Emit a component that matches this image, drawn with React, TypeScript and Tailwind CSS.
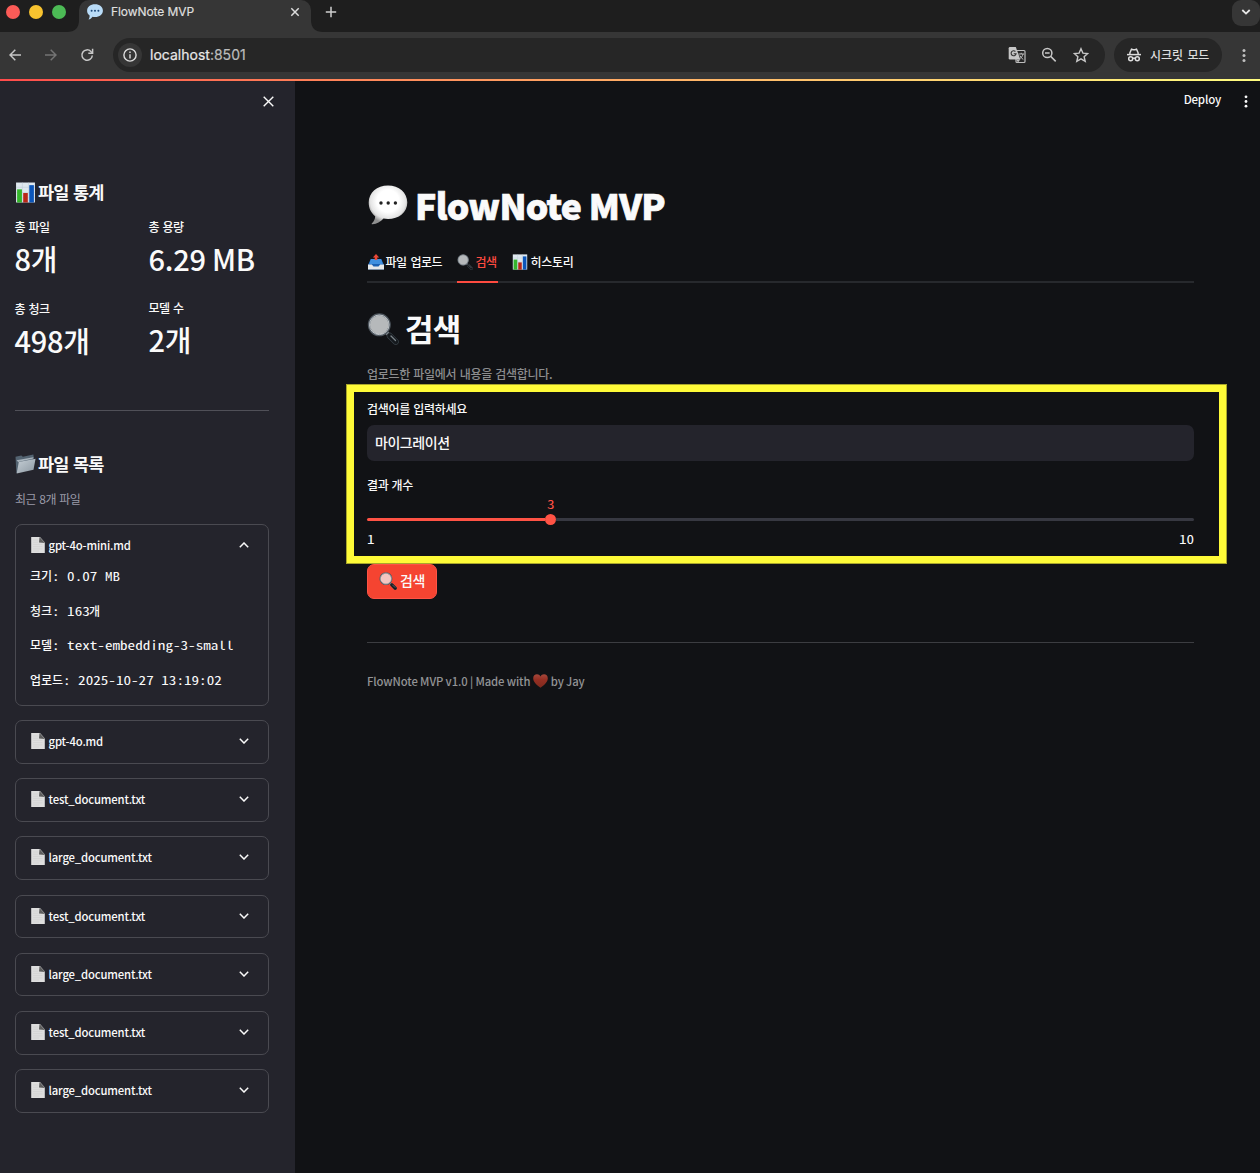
import React from "react";

type IconProps = { className?: string };

const sans = "font-['Noto_Sans_CJK_KR',sans-serif]";
const mono = "font-['Noto_Sans_Mono_CJK_KR','Liberation_Mono',monospace]";

function ChartEmoji({ className }: IconProps) {
  return (
    <svg className={className} viewBox="0 0 20 20">
      <rect x="1" y="0.5" width="18" height="19" fill="#dfe8ef" />
      <path d="M1 5h18M1 10h18M1 15h18M7 .5v19M13 .5v19" stroke="#bccbd8" strokeWidth=".5" />
      <rect x="2" y="7" width="4.6" height="12.5" fill="#35b52c" />
      <rect x="7.8" y="10.5" width="4.4" height="9" fill="#b82717" />
      <rect x="13.6" y="3" width="4.4" height="16.5" fill="#0b55b9" />
    </svg>
  );
}

function MagnifierEmoji({ className, lens = "#b6b9bb" }: IconProps & { lens?: string }) {
  return (
    <svg className={className} viewBox="0 0 32 32">
      <path d="M19 19l4 4" stroke="#8b9298" strokeWidth="3.500" />
      <path d="M22.800 22.800l6 6" stroke="#3b444b" strokeWidth="6" strokeLinecap="round" />
      <path d="M22.800 22.800l6 6" stroke="#15191d" strokeWidth="4.800" strokeLinecap="round" />
      <path d="M24 23l4.500 4.500" stroke="#7d868c" strokeWidth="1.200" strokeLinecap="round" />
      <circle cx="12.300" cy="11.8" r="10.400" fill={lens} stroke="#4e565e" strokeWidth="2.200" />
      <circle cx="12.300" cy="11.8" r="9.800" fill="none" stroke="#dbe0e3" strokeWidth=".8" />
    </svg>
  );
}

function SpeechEmoji({ className }: IconProps) {
  return (
    <svg className={className} viewBox="0 0 40 40">
      <defs>
        <radialGradient id="bubble" cx=".5" cy=".4" r=".57">
          <stop offset=".5" stopColor="#ffffff" />
          <stop offset=".8" stopColor="#e4e4e4" />
          <stop offset="1" stopColor="#8f8f8f" />
        </radialGradient>
      </defs>
      <path
        d="M20 .5C31 .5 39.3 7.600 39.300 17.500S31 34 20 34c-1.600 0-3.100-.1-4.500-.4C12.600 37 8.500 39.400 4.300 39.300c-.7 0-.8-.7-.3-1.100 2-1.700 3.100-4.400 3.200-7C3.200 28 .7 23.500.7 17.500.7 7.600 9 .5 20 .5z"
        fill="url(#bubble)"
      />
      <circle cx="13" cy="18" r="1.700" fill="#222" />
      <circle cx="20.200" cy="18" r="1.700" fill="#222" />
      <circle cx="27.400" cy="18" r="1.700" fill="#222" />
    </svg>
  );
}

function TabBubble({ className }: IconProps) {
  return (
    <svg className={className} viewBox="0 0 16 16">
      <path d="M8 .3c4.600 0 7.900 2.700 7.900 6.400S12.600 13 8 13c-.9 0-1.700-.1-2.500-.3-1 1.500-2.600 2.700-4 2.900.8-1 1.200-2.500 1.100-4.100C1 10.300.1 8.600.1 6.700.1 3 3.400.3 8 .3z" fill="#b9dcf8" />
      <circle cx="4.600" cy="6.700" r="1" fill="#1e4b7c" />
      <circle cx="8" cy="6.700" r="1" fill="#1e4b7c" />
      <circle cx="11.400" cy="6.700" r="1" fill="#1e4b7c" />
    </svg>
  );
}

function OutboxEmoji({ className }: IconProps) {
  return (
    <svg className={className} viewBox="0 0 16 16">
      <path d="M2.500 5.500h11L16 11v4.500H0V11z" fill="#1c62b4" />
      <path d="M2.800 5h10.400l1.600 5H1.200z" fill="#3f8fdf" />
      <path d="M0 10.500h3.800l1.700 2h5l1.700-2H16v5H0z" fill="#e6e8ea" />
      <path d="M8 0l3.200 3.400H9.300V6H6.700V3.400H4.800z" fill="#ea4837" />
    </svg>
  );
}

function FolderEmoji({ className }: IconProps) {
  return (
    <svg className={className} viewBox="0 0 20 19">
      <defs>
        <linearGradient id="folder" x1="0" y1="0" x2="1" y2="1">
          <stop stopColor="#c6cfd6" />
          <stop offset="1" stopColor="#8c98a2" />
        </linearGradient>
      </defs>
      <path d="M.5 2.500L6 1.300l1.500 1.200L17.500.5l.5 3.500L3 17.500 1.300 18z" fill="#536371" />
      <path d="M1.500 6L17.500 3v1.200L3 7.500z" fill="#a9b4bd" />
      <path d="M3.600 7.700L19.600 4.600 17.600 15 1.600 18.500z" fill="url(#folder)" />
    </svg>
  );
}

function PageEmoji({ className }: IconProps) {
  return (
    <svg className={className} viewBox="0 0 14 16">
      <path d="M.2 0H9l4.800 5.500V16H.2z" fill="#dedede" />
      <path d="M2 3h5M2 5.200h5M2 7.400h9.500M2 9.600h9.500M2 11.800h9.500M2 14h6" stroke="#cecece" strokeWidth=".6" />
      <path d="M8.500 0L14 6 8 5.500z" fill="#5d5d5d" />
    </svg>
  );
}

function HeartEmoji({ className }: IconProps) {
  return (
    <svg className={className} viewBox="0 0 15 14">
      <defs>
        <linearGradient id="heart" x1="0" y1="0" x2="0" y2="1">
          <stop stopColor="#a5483b" />
          <stop offset=".4" stopColor="#962f23" />
          <stop offset="1" stopColor="#7e2a1e" />
        </linearGradient>
      </defs>
      <path d="M7.500 13.800C4 11.300.2 8 .2 4.200.2 1.900 1.900.3 4 .3c1.500 0 2.800.8 3.500 2.100C8.200 1.100 9.500.3 11 .3c2.100 0 3.800 1.600 3.800 3.900 0 3.800-3.800 7.100-7.300 9.600z" fill="url(#heart)" />
    </svg>
  );
}

function Chevron({ up, className }: IconProps & { up?: boolean }) {
  return (
    <svg className={className} viewBox="0 0 10 6" fill="none" stroke="currentColor" strokeWidth="1.500">
      {up ? <path d="M.8 5.200L5 1l4.200 4.200" /> : <path d="M.8.8L5 5 9.200.8" />}
    </svg>
  );
}

function Dots({ className }: IconProps) {
  return (
    <svg className={className} viewBox="0 0 4 14" fill="currentColor">
      <circle cx="2" cy="2" r="1.500" />
      <circle cx="2" cy="7" r="1.500" />
      <circle cx="2" cy="12" r="1.500" />
    </svg>
  );
}

function BrowserChrome() {
  return (
    <header className="h-[79px] shrink-0 bg-[#363636] font-['Inter','Noto_Sans_CJK_KR',sans-serif]">
      <div className="flex h-8 bg-[#1e1e1e]">
        <div className="flex w-[79px] gap-[9px] pl-1.5 pt-[5px]">
          <span className="size-3.5 rounded-full bg-[#fc5b57]" />
          <span className="size-3.5 rounded-full bg-[#f8c32f]" />
          <span className="size-3.5 rounded-full bg-[#4cba55]" />
        </div>
        <div className="-ml-3 flex w-3 flex-col justify-end">
          <svg viewBox="0 0 12 12" className="size-3">
            <path d="M12 0v12H0C8 12 12 8 12 0z" fill="#363636" />
          </svg>
        </div>
        <div className="flex h-8 w-[232px] items-start rounded-t-[10px] bg-[#363636] pl-2 pr-[11px] pt-1">
          <TabBubble className="size-4" />
          <span className="ml-2 text-[12px] leading-4 tracking-[-0.070px] text-[#dfdfdf] [-webkit-text-stroke:0.200px]">FlowNote MVP</span>
          <svg viewBox="0 0 10 10" className="ml-auto mt-[3px] size-[10px]" stroke="#dddddd" strokeWidth="1.500">
            <path d="M1.300 1.300l7.400 7.400M8.700 1.300L1.300 8.700" />
          </svg>
        </div>
        <div className="flex w-3 flex-col justify-end">
          <svg viewBox="0 0 12 12" className="size-3">
            <path d="M0 0v12h12C4 12 0 8 0 0z" fill="#363636" />
          </svg>
        </div>
        <svg viewBox="0 0 12 12" className="ml-[2px] mt-[6px] size-3" stroke="#cfcfcf" strokeWidth="1.500">
          <path d="M6 .8v10.400M.8 6h10.400" />
        </svg>
        <div className="ml-auto flex h-[26px] w-7 items-center justify-center rounded-[9px] bg-[#363636]">
          <svg viewBox="0 0 10 6" className="mt-[-2px] h-[6px] w-[10px]" fill="none" stroke="#e8e8e8" strokeWidth="1.800">
            <path d="M1.300 1L5 4.600 8.700 1" />
          </svg>
        </div>
      </div>
      <div className="flex h-[46px] items-center">
        <div className="flex w-[113px] items-center pl-[9px]">
          <svg viewBox="0 0 12 12" className="size-3" fill="none" stroke="#c7c7c7" strokeWidth="1.500">
            <path d="M12 6H1M6.300.8L1 6l5.300 5.200" />
          </svg>
          <svg viewBox="0 0 12 12" className="ml-6 size-3" fill="none" stroke="#747474" strokeWidth="1.500">
            <path d="M0 6h11M5.700.8L11 6l-5.300 5.200" />
          </svg>
          <svg viewBox="0 0 14 14" className="ml-[23px] size-3.5" fill="none" stroke="#c7c7c7" strokeWidth="1.500">
            <path d="M12.300 7.500A5.200 5.200 0 1 1 10.900 3.500L12.500 5" />
            <path d="M12.600.8v4.400H8.300" />
          </svg>
        </div>
        <div className="flex h-[34px] w-[992px] items-center rounded-full bg-[#262626] pl-[5px] pr-4">
          <span className="flex size-6 items-center justify-center rounded-full bg-[#363636]">
            <svg viewBox="0 0 14 14" className="size-3.5" fill="none" stroke="#dddddd" strokeWidth="1.400">
              <circle cx="7" cy="7" r="6.100" />
              <path d="M7 6.200v4.300M7 3.500v1.500" />
            </svg>
          </span>
          <span className="ml-2 text-[14px] leading-5 tracking-[0.010px] text-[#e8e8e8] [-webkit-text-stroke:0.200px]">
            localhost<span className="text-[#bcbcbc]">:8501</span>
          </span>
          <svg viewBox="0 0 18 18" className="ml-auto size-[18px]">
            <rect x="8" y="4.500" width="9" height="12" rx="1" fill="none" stroke="#bdbdbd" strokeWidth="1.200" />
            <path d="M2 1h5.800l4.500 12.500H2A1.300 1.300 0 0 1 .7 12.200V2.300A1.300 1.300 0 0 1 2 1z" fill="#c6c6c6" />
            <path d="M8.300 13.500l1.700 3 2.200-3" fill="#bdbdbd" />
            <path d="M7.400 5.500a2.500 2.500 0 1 0 .7 2.200H5.700" fill="none" stroke="#333" strokeWidth="1.100" />
            <path d="M10.500 8h5.500M13.200 6.800V8M15 8c-.5 2.500-2 4-3.500 5M11.800 9.500c.8 1.800 2 3 3.500 4" fill="none" stroke="#bdbdbd" />
          </svg>
          <svg viewBox="0 0 16 16" className="ml-[15px] size-4" fill="none" stroke="#c7c7c7" strokeWidth="1.500">
            <circle cx="6.300" cy="6" r="4.600" />
            <path d="M9.700 9.400l5 5M4 6h4.600" />
          </svg>
          <svg viewBox="0 0 16 16" className="ml-4 size-4" fill="none" stroke="#c7c7c7" strokeWidth="1.400">
            <path d="M8 1.700l1.900 4.400 4.800.4-3.600 3.200 1.100 4.700L8 11.900l-4.200 2.500 1.100-4.700-3.600-3.200 4.800-.4z" />
          </svg>
        </div>
        <div className="ml-[9px] flex h-[34px] w-[108px] items-center rounded-full bg-[#262626] pl-[13px]">
          <svg viewBox="0 0 14 14" className="size-3.5" fill="none" stroke="#dedede" strokeWidth="1.500">
            <path d="M0 6.600h14" />
            <path d="M2.900 6.500V4.800L4.500 1.200l1.500.5h2l1.500-.5 1.600 3.600v1.700" />
            <circle cx="3.700" cy="10.700" r="2" />
            <circle cx="10.300" cy="10.700" r="2" />
            <path d="M5.700 10.200h2.600" />
          </svg>
          <span className="ml-[9px] mt-px whitespace-nowrap text-[12px] font-medium leading-4 tracking-[-0.100px] text-[#dedede] [word-spacing:1.500px]">시크릿 모드</span>
        </div>
        <Dots className="ml-5 h-[15px] w-1 text-[#c0c0c0]" />
      </div>
    </header>
  );
}

function Metric({ label, value }: { label: string; value: string }) {
  return (
    <div className="w-[134px] shrink-0">
      <div className="h-[17px] text-[12px] font-medium leading-[16px] tracking-[-0.600px] [word-spacing:1.500px]">{label}</div>
      <div className="h-[45px] whitespace-nowrap text-[29px] font-medium leading-[44px] tracking-[-0.250px]">{value}</div>
    </div>
  );
}

function FileTitle({ name, open }: { name: string; open?: boolean }) {
  return (
    <div className="flex h-[40px] items-center pl-[15px] pr-[19px]">
      <PageEmoji className="h-4 w-3.5" />
      <span className="ml-[3.500px] text-[11.300px] font-medium leading-4 tracking-[-0.150px]">{name}</span>
      <Chevron up={open} className="ml-auto h-[6px] w-[10px]" />
    </div>
  );
}

const files = [
  "gpt-4o.md",
  "test_document.txt",
  "large_document.txt",
  "test_document.txt",
  "large_document.txt",
  "test_document.txt",
  "large_document.txt",
];

const details = [
  ["크기", "0.07 MB", ""],
  ["청크", "163", "개"],
  ["모델", "text-embedding-3-small", ""],
  ["업로드", "2025-10-27 13:19:02", ""],
];

function WideMono({ children, className = "" }: { children: React.ReactNode; className?: string }) {
  return (
    <span className={`${mono} ${className} inline-block scale-x-[1.260] whitespace-pre text-[12px] font-normal`}>
      {children}
    </span>
  );
}

function Sidebar() {
  return (
    <aside className="w-[295px] shrink-0 bg-[#24242c] pl-[15px] pr-[26px]">
      <div className="flex h-[98px] justify-end pt-[15px]">
        <svg viewBox="0 0 11 11" className="mr-[-5px] size-[11px]" stroke="#fafafa" strokeWidth="1.400">
          <path d="M.7.7l9.600 9.600M10.300.7L.7 10.300" />
        </svg>
      </div>
      <h3 className="flex h-[26px] items-center text-[17.500px] font-bold leading-[26px] tracking-[-0.750px] [word-spacing:1px]">
        <ChartEmoji className="mr-[2px] size-[21px]" />파일 통계
      </h3>
      <div className="-ml-[0.500px] mt-[14px] flex">
        <Metric label="총 파일" value="8개" />
        <Metric label="총 용량" value="6.29 MB" />
      </div>
      <div className="-ml-[0.500px] mt-5 flex">
        <Metric label="총 청크" value="498개" />
        <div className="-mt-px">
          <Metric label="모델 수" value="2개" />
        </div>
      </div>
      <hr className="mt-[47px] border-[#505058]" />
      <h3 className="mt-10 flex h-[26px] items-center text-[17.500px] font-bold leading-[26px] tracking-[-0.750px] [word-spacing:1px]">
        <FolderEmoji className="mr-[2px] h-5 w-[21px]" />파일 목록
      </h3>
      <p className="mt-[14px] h-4 text-[12px] leading-4 tracking-[-0.500px] text-[#9a9aa8] [word-spacing:1px]">최근 8개 파일</p>
      <div className="mt-[17px] flex flex-col gap-[14.500px]">
        <div className="h-[181.700px] rounded-[7px] border border-[#4a4a51]">
          <FileTitle name="gpt-4o-mini.md" open />
          <div className="flex flex-col gap-[18.700px] pl-[14px] pt-[3px]">
            {details.map(([k, v, unit]) => (
              <p key={k} className="flex h-4 text-[12px] font-medium leading-4 tracking-[-0.100px]">
                {k}
                <WideMono className="origin-left tracking-normal">{": " + v}</WideMono>
                {unit && <span className="ml-[7px]">{unit}</span>}
              </p>
            ))}
          </div>
        </div>
        {files.map((name, i) => (
          <div key={i} className="h-[43.650px] rounded-[7px] border border-[#4a4a51]">
            <FileTitle name={name} />
          </div>
        ))}
      </div>
    </aside>
  );
}

function SearchForm() {
  return (
    <section className="relative mt-[18px]">
      <label className="block h-[18px] text-[12px] font-medium leading-[18px] tracking-[-0.300px] [word-spacing:1px]">검색어를 입력하세요</label>
      <div className="mt-[7px] flex h-9 items-center rounded-[7px] bg-[#24242c] pb-[2px] pl-2 text-[14px] font-medium tracking-[-0.450px]">마이그레이션</div>
      <label className="mt-[15px] block h-[18px] text-[12px] font-medium leading-[18px] tracking-[-0.400px] [word-spacing:1px]">결과 개수</label>
      <div className="mt-[3px] flex h-[14px] pl-[180px] leading-[14px] text-[#ff5345]">
        <WideMono className="origin-left">3</WideMono>
      </div>
      <div className="mt-[3px] flex h-[11px] items-center">
        <div className="h-[3px] w-[178px] rounded-l-full bg-[#ff5345]" />
        <div className="size-[11px] rounded-full bg-[#ff5345]" />
        <div className="h-[3px] flex-1 rounded-r-full bg-[#373841]" />
      </div>
      <div className="mt-[6px] flex h-[17px] justify-between leading-4">
        <WideMono className="origin-left">1</WideMono>
        <WideMono className="origin-right">10</WideMono>
      </div>
      <div className="pointer-events-none absolute -bottom-[16px] -left-[21px] -right-[33px] -top-[16px] border-8 border-[#fffb38] outline outline-1 -outline-offset-1 outline-[#a9a62c]" />
    </section>
  );
}

function Main() {
  return (
    <main className="flex-1">
      <div className="flex h-[40px] items-center justify-end pr-3">
        <span className="mb-[4px] text-[11.500px] font-medium leading-4 tracking-[-0.200px]">Deploy</span>
        <Dots className="ml-[23px] h-[13px] w-1" />
      </div>
      <div className="w-[899px] pl-[72px]">
        <h1 className="mt-[58px] flex h-[52px] items-center text-[35.500px] font-black leading-[52px] tracking-[-0.720px] [-webkit-text-stroke:0.700px]">
          <SpeechEmoji className="ml-[0.500px] mr-[7.500px] size-[40px]" />FlowNote MVP
        </h1>
        <nav className="mt-[14px] flex h-[38px] gap-[14px] text-[12px] font-medium leading-4 tracking-[-0.450px] shadow-[inset_0_-2px_0_#27292d]">
          <div className="flex w-[76px] items-start whitespace-nowrap pt-[9px] [word-spacing:1.500px]">
            <OutboxEmoji className="ml-px mr-[1.500px] size-4" />파일 업로드
          </div>
          <div className="flex w-[41px] items-start whitespace-nowrap border-b-2 border-[#ff4b40] pt-[9px] text-[#ff4b40]">
            <MagnifierEmoji className="mr-[2.500px] size-4" />검색
          </div>
          <div className="flex items-start whitespace-nowrap pt-[9px] tracking-[-0.250px]">
            <ChartEmoji className="mr-[2.500px] size-4" />히스토리
          </div>
        </nav>
        <h2 className="mt-[23px] flex h-11 items-center text-[31px] font-bold leading-[44px] tracking-[-0.800px]">
          <MagnifierEmoji className="mr-[6px] mt-0.5 size-8" />검색
        </h2>
        <p className="mt-[16px] h-4 text-[12px] font-medium leading-4 tracking-[-0.300px] text-[#8c8d8f] [word-spacing:1px]">업로드한 파일에서 내용을 검색합니다.</p>
        <SearchForm />
        <button className="mt-4 flex h-[35px] w-[70px] items-center rounded-[7px] border border-[#ff5345] bg-[#f54431] pb-[2px] pl-[11px] text-[14px] font-medium tracking-[-0.400px]">
          <MagnifierEmoji lens="#f4c5c0" className="mr-[3px] size-[18px]" />검색
        </button>
        <hr className="mt-[43px] border-[#3c3d41]" />
        <footer className="mt-[30px] flex h-4 items-center whitespace-pre text-[11.300px] font-medium leading-4 tracking-[-0.120px] text-[#939496]">
          FlowNote MVP v1.0 | Made with <HeartEmoji className="ml-[0.500px] h-3.5 w-[15px]" /> by Jay
        </footer>
      </div>
    </main>
  );
}

export default function App() {
  return (
    <div className={`${sans} flex h-[1173px] w-[1260px] flex-col overflow-hidden bg-[#111215] text-[#fafafa]`}>
      <BrowserChrome />
      <div className="h-0.5 shrink-0 bg-linear-to-r from-[#ff4b4b] to-[#fffd80]" />
      <div className="flex flex-1">
        <Sidebar />
        <Main />
      </div>
    </div>
  );
}
